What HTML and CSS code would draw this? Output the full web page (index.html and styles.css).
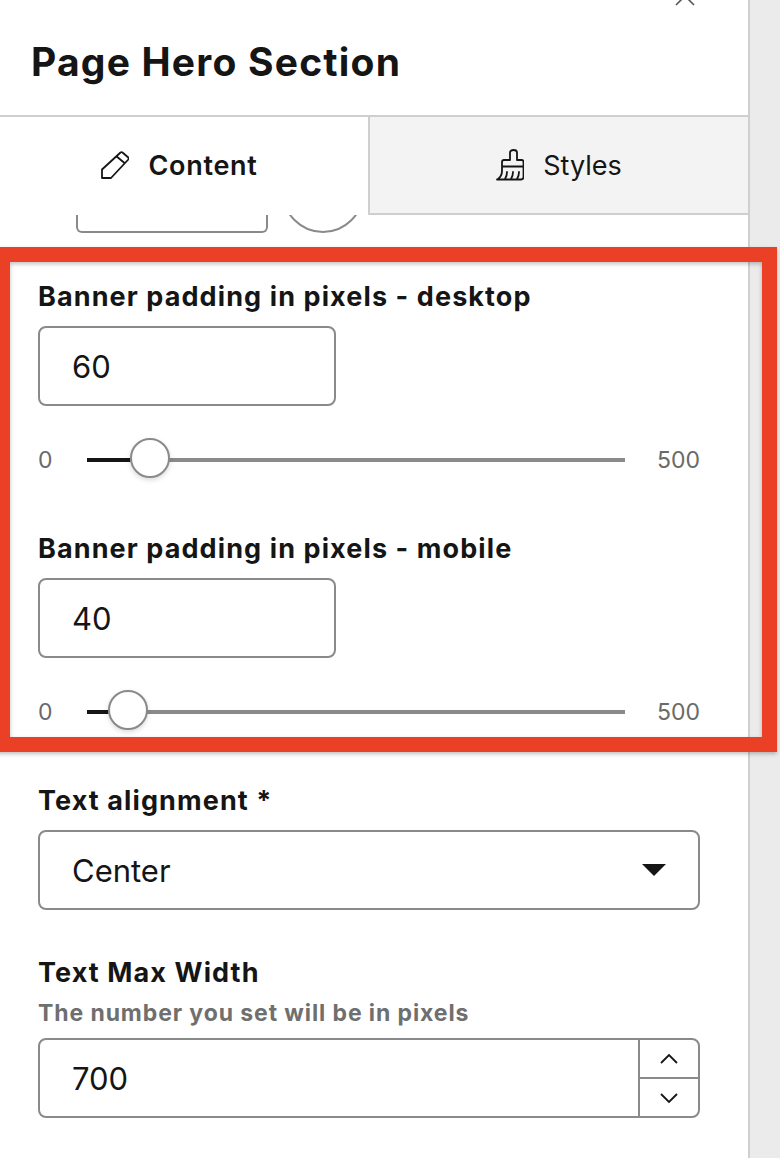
FILE: index.html
```html
<!DOCTYPE html>
<html>
<head>
  <title>Page Hero Section</title>
  <link rel="stylesheet" href="styles.css">
</head>
<body>

  <div class="panel">
    <!-- Header -->
    <div class="panel-head">
      <svg class="close-icon" width="24" height="24" viewBox="0 0 24 24"><path d="M3 5 L12 -4 L21 5" /></svg>
      <h1>Page Hero Section</h1>
    </div>

    <!-- Tabs -->
    <div class="tabs">
      <div class="tab active">
        <svg width="28" height="28" viewBox="0 0 28 28"><path d="M1 27 V18.5 L19.5 1.5 Q20.5 .7 21.5 1.5 L27.3 6.5 Q28 7.5 27.3 8.5 L10 27 Z M15.7 5.5 L23.5 12" /></svg>
        <span>Content</span>
      </div>
      <div class="tab">
        <svg width="28" height="32" viewBox="0 0 28 32"><path d="M14 11 V3.5 Q14 1 17.5 1 Q21 1 21 3.5 V11 H25.5 Q27.5 11 27.5 13 V28 Q27.5 30.5 25 30.5 H1 M14 11 H8 Q6 11 6 13 V22 Q6 27 2 30 M6 17.5 H27.5 M11 23 Q11 27 9 30 M17 23 Q17 27 15 30 M23 23 Q23 27 21 30" /></svg>
        <span>Styles</span>
      </div>
    </div>

    <div class="form">
      <!-- field scrolled under the tabs -->
      <div class="cut-row">
        <div class="cut-input"></div>
        <div class="cut-circle"></div>
      </div>

      <div class="field first">
        <label>Banner padding in pixels - desktop</label>
        <div class="input short">60</div>
        <div class="slider-row">
          <span>0</span>
          <div class="track">
            <div class="fill fill-desktop"></div>
            <div class="thumb"></div>
          </div>
          <span>500</span>
        </div>
      </div>

      <div class="field">
        <label>Banner padding in pixels - mobile</label>
        <div class="input short">40</div>
        <div class="slider-row">
          <span>0</span>
          <div class="track">
            <div class="fill fill-mobile"></div>
            <div class="thumb"></div>
          </div>
          <span>500</span>
        </div>
      </div>

      <div class="field">
        <label>Text alignment *</label>
        <div class="input select">
          <span>Center</span>
          <div class="caret"></div>
        </div>
      </div>

      <div class="field last">
        <label>Text Max Width</label>
        <div class="help">The number you set will be in pixels</div>
        <div class="input number">
          <span class="number-value">700</span>
          <div class="stepper">
            <div class="step"><svg width="20" height="12" viewBox="0 0 20 12"><path d="M2 10 L10 2 L18 10" /></svg></div>
            <div class="step"><svg width="20" height="12" viewBox="0 0 20 12"><path d="M2 2 L10 10 L18 2" /></svg></div>
          </div>
        </div>
      </div>
    </div>
  </div>

  <div class="gutter"></div>

  <!-- Annotation drawn over the screenshot -->
  <div class="highlight"></div>

</body>
</html>
```

FILE: styles.css
```css
html, body    { margin: 0; padding: 0; }
body          { display: flex; width: 780px; height: 1158px; overflow: hidden; position: relative; font-family: Inter, "Noto Sans", sans-serif; color: #151515; background: #fff; }

.panel        { width: 748px; flex: none; }
.gutter       { flex: 1; background: #ebebeb; border-left: 2px solid #cfcfcf; }

/* header */
.panel-head   { height: 115px; box-sizing: border-box; padding: 37px 0 0 31px; position: relative; }
.panel-head h1 { margin: 0; font-size: 39px; line-height: 50px; font-weight: 700; letter-spacing: 1.2px; }
.close-icon   { position: absolute; left: 673px; top: 0; fill: none; stroke: #555; stroke-width: 1.6; }

/* tabs */
.tabs         { display: flex; height: 100px; box-sizing: border-box; border-top: 2px solid #cfcfcf; }
.tab          { flex: 1; display: flex; align-items: center; justify-content: center; gap: 19px; font-size: 27px; background: #f3f3f3; border-left: 2px solid #cfcfcf; border-bottom: 2px solid #cfcfcf; }
.tab.active   { flex: none; width: 368px; box-sizing: border-box; padding: 0 9px 2px 0; background: #fff; border: 0; font-weight: 600; letter-spacing: .7px; }
.tab svg      { fill: none; stroke: #151515; stroke-width: 1.8; stroke-linecap: round; stroke-linejoin: round; }

/* form */
.form         { padding: 0 48px 0 38px; }
.cut-row      { display: flex; gap: 14px; height: 18px; overflow: hidden; padding-left: 38px; }
.cut-input    { width: 188px; height: 16px; flex: none; border: 2px solid #8a8a8a; border-top: 0; border-radius: 0 0 6px 6px; }
.cut-circle   { width: 82px; height: 82px; flex: none; margin-top: -64px; box-sizing: border-box; border: 2px solid #8a8a8a; border-radius: 50%; }

.field        { margin-top: 40px; }
.field.first  { margin-top: 45px; }
.field.last   { margin-top: 44px; }
.field label  { display: block; padding-top: 1px; font-size: 27px; line-height: 36px; font-weight: 700; letter-spacing: 1.1px; margin-bottom: 11px; }
.help         { font-size: 23px; line-height: 30px; font-weight: 700; letter-spacing: .9px; color: #6f6f6f; margin: -4px 0 10px; }

.input        { height: 80px; box-sizing: border-box; border: 2px solid #8a8a8a; border-radius: 8px; padding: 0 32px; font-size: 31px; display: flex; align-items: center; background: #fff; }
.input.short  { width: 298px; }

.slider-row   { display: flex; align-items: center; height: 60px; margin-top: 24px; font-size: 23px; color: #6a6a6a; }
.slider-row span:first-child { width: 49px; }
.slider-row span:last-child  { margin-left: 32px; }
.track        { width: 538px; height: 4px; background: #8a8a8a; position: relative; }
.fill         { position: absolute; left: 0; top: 0; height: 4px; background: #151515; }
.thumb        { position: absolute; top: -20px; width: 40px; height: 40px; box-sizing: border-box; border: 2px solid #8a8a8a; border-radius: 50%; background: #fff; box-shadow: 0 2px 5px rgba(0,0,0,.15); }
.fill-desktop { width: 43px; }
.fill-desktop + .thumb { left: 43px; }
.fill-mobile  { width: 21px; }
.fill-mobile + .thumb { left: 21px; }

.select       { justify-content: space-between; padding-right: 32px; }
.caret        { width: 0; height: 0; border-left: 12px solid transparent; border-right: 12px solid transparent; border-top: 12px solid #151515; }

.number       { padding: 0; align-items: stretch; }
.number-value { flex: 1; padding-left: 32px; display: flex; align-items: center; }
.stepper      { width: 60px; box-sizing: border-box; display: flex; flex-direction: column; border-left: 2px solid #8a8a8a; }
.step         { flex: 1; display: flex; align-items: center; justify-content: center; }
.step + .step { border-top: 2px solid #8a8a8a; }
.step svg     { fill: none; stroke: #151515; stroke-width: 1.8; }

/* red annotation box */
.highlight    { position: absolute; left: -5px; top: 247px; width: 752px; height: 475px; border: 15px solid #ea4025; box-shadow: 0 2px 4px rgba(0,0,0,.25), inset 0 2px 4px rgba(0,0,0,.25); }
```
